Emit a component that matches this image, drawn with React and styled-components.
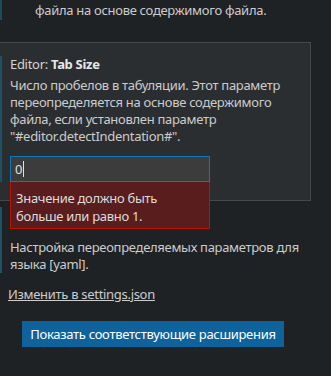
import styled, { createGlobalStyle } from "styled-components";

const GlobalStyle = createGlobalStyle`
    html, body {
        margin: 0;
        padding: 0;
        background-color: #1f2225;
    }
    body {
        font-family: "Noto Sans", "Open Sans", sans-serif;
        font-size: 13px;
        letter-spacing: -0.3px;
        color: #cccccc;
    }
`;

const Page = styled.div`
    width: 331px;
    height: 376px;
    overflow: hidden;
    background-color: #1f2225;
`;

// setting row with the modified indicator on the left edge
const Item = styled.div`
    position: relative;
    padding-left: ${(p) => p.$indent || 8}px;
    border-left: 2px solid ${(p) => p.$bar || "transparent"};
`;

const Line = styled.div`
    line-height: 17px;
    white-space: nowrap;
`;

const Panel = styled.div`
    margin-top: 22px;
    width: 311px;
    box-sizing: border-box;
    background-color: #2b2e31;
    border: 1px solid #46494c;
    border-left: none;
    padding: 13px 0 18px 0;
`;

const Title = styled.div`
    line-height: 17px;
    color: #d4d4d4;
    margin-bottom: 4px;
    b {
        color: #e8e8e8;
        font-weight: 700;
    }
`;

const Desc = styled.div`
    line-height: 17px;
    width: 292px;
`;

const InputWrap = styled.div`
    position: relative;
    margin-top: 11px;
    width: 200px;
`;

const Input = styled.div`
    box-sizing: border-box;
    height: 26px;
    width: 200px;
    background-color: #3c3c3c;
    border: 1px solid #1177bb;
    padding-left: 4px;
    color: #e0e0e0;
    display: flex;
    align-items: center;
`;

const Caret = styled.span`
    display: inline-block;
    width: 1px;
    height: 16px;
    background-color: #e0e0e0;
    margin-left: 1px;
`;

const ErrorBox = styled.div`
    position: absolute;
    left: 0;
    top: 26px;
    width: 200px;
    box-sizing: border-box;
    height: 47px;
    background-color: #5a1d1d;
    border: 1px solid #be1100;
    border-top: none;
    padding: 7px 5px 0 5px;
    line-height: 18px;
    color: #dcdcdc;
    z-index: 2;
`;

const Next = styled(Item)`
    margin-top: 6px;
    padding-top: 32px;
`;

const LinkText = styled.a`
    display: inline-block;
    margin: 13px 0 0 8px;
    line-height: 17px;
    color: #cccccc;
    text-decoration: underline;
    cursor: pointer;
`;

const ButtonRow = styled.div`
    padding: 18px 0 0 22px;
`;

const Button = styled.button`
    width: 262px;
    height: 26px;
    border: none;
    background-color: #0e639c;
    color: #ffffff;
    font-family: "Noto Sans", "Open Sans", sans-serif;
    font-size: 13px;
    letter-spacing: -0.3px;
    padding: 0;
    cursor: pointer;
`;

const App = () => {
    return (
        <>
            <GlobalStyle />
            <Page>
                <Item $indent={33} $bar="#1d4b59" style={{ paddingTop: 2, height: 18 }}>
                    <Line>файла на основе содержимого файла.</Line>
                </Item>

                <Panel>
                    <Item $bar="#1f5266">
                        <Title>Editor: <b>Tab Size</b></Title>
                        <Desc>
                            Число пробелов в табуляции. Этот параметр переопределяется на основе содержимого файла, если установлен параметр "#editor.detectIndentation#".
                        </Desc>
                        <InputWrap>
                            <Input>0<Caret /></Input>
                            <ErrorBox>
                                Значение должно быть<br />больше или равно 1.
                            </ErrorBox>
                        </InputWrap>
                    </Item>
                </Panel>

                <Next $bar="#1f5266">
                    <Desc>Настройка переопределяемых параметров для языка [yaml].</Desc>
                </Next>
                <LinkText>Изменить в settings.json</LinkText>
                <ButtonRow>
                    <Button>Показать соответствующие расширения</Button>
                </ButtonRow>
            </Page>
        </>
    );
};

export default App;
